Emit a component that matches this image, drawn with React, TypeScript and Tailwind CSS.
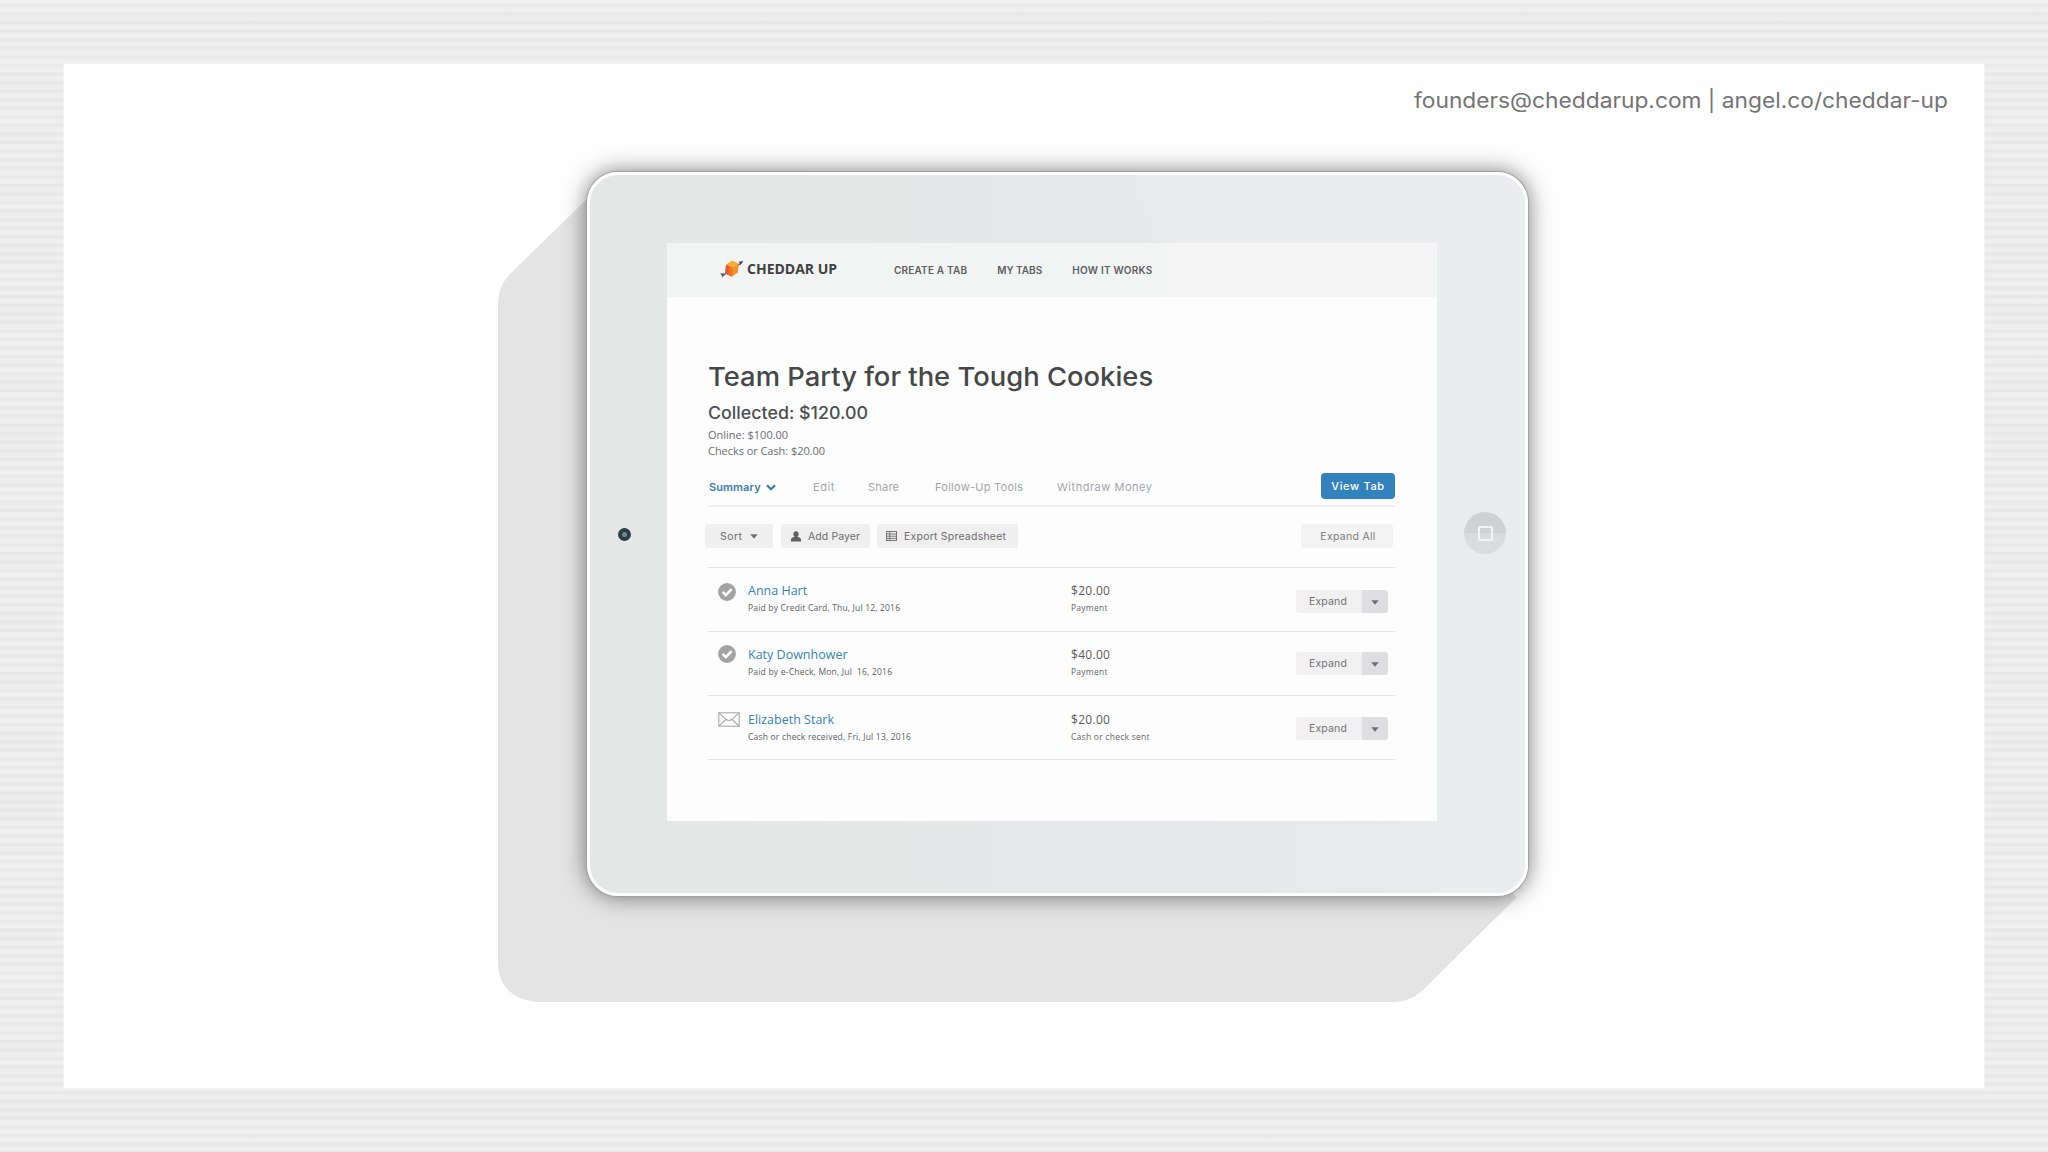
import clsx from "clsx";

type Payment = {
  name: string;
  detail: string;
  detailClass: string;
  amount: string;
  note: string;
  status: "paid" | "mailed";
  iconClass: string;
  textClass: string;
  actionClass: string;
};

const payments: Payment[] = [
  {
    name: "Anna Hart",
    detail: "Paid by Credit Card, Thu, Jul 12, 2016",
    detailClass: "tracking-[0.18px]",
    amount: "$20.00",
    note: "Payment",
    status: "paid",
    iconClass: "mt-[15px]",
    textClass: "mt-[15px]",
    actionClass: "mt-[22px]",
  },
  {
    name: "Katy Downhower",
    detail: "Paid by e-Check, Mon, Jul\u00a0 16, 2016",
    detailClass: "tracking-[0.21px]",
    amount: "$40.00",
    note: "Payment",
    status: "paid",
    iconClass: "mt-[13px]",
    textClass: "mt-[15px]",
    actionClass: "mt-5",
  },
  {
    name: "Elizabeth Stark",
    detail: "Cash or check received, Fri, Jul 13, 2016",
    detailClass: "tracking-[0.2px]",
    amount: "$20.00",
    note: "Cash or check sent",
    status: "mailed",
    iconClass: "mt-4",
    textClass: "mt-4",
    actionClass: "mt-[21px]",
  },
];

function Caret({ className }: { className?: string }) {
  return (
    <svg viewBox="0 0 8 5" className={clsx("h-[5px] w-2 shrink-0", className)}>
      <path d="M0.3 0.2h7.4L4 4.8z" fill="currentColor" />
    </svg>
  );
}

function CheddarLogo() {
  return (
    <svg viewBox="0 0 24 18" className="h-[18px] w-6 shrink-0">
      <path d="M2 16L22 2.5" stroke="#4a4f52" strokeWidth="1.4" />
      <path d="M23.6 0.8l-5.2 1.1 1.5 1 .2 2z" fill="#3f4447" />
      <path d="M0.2 13.2l3.4 0.4 1.8 1.4-2 .5-.6 2.3-1-2.4z" fill="#4a5a62" />
      <path d="M12 0.8l6.6 3.2-0.8 8.4-6 4.4-6.4-3.2L6 5z" fill="#f39325" />
      <path d="M12 0.8l6.6 3.2-6.2 3.4L6 5z" fill="#f8ab2c" />
      <path d="M6 5l6.4 2.4-.6 9.4-6.4-3.2z" fill="#ee6f2d" />
      <path d="M6 5l3.4 1.3-1 8.8-3-1.5z" fill="#e4573a" />
    </svg>
  );
}

function StatusIcon({ status }: { status: Payment["status"] }) {
  if (status === "paid") {
    return (
      <svg viewBox="0 0 18 18" className="size-[18px]">
        <circle cx="9" cy="9" r="8.9" fill="#a3a3a3" />
        <path d="M4.6 8.9l3.2 3.3 5.8-6" fill="none" stroke="#fff" strokeWidth="2.6" />
      </svg>
    );
  }

  return (
    <svg viewBox="0 0 22 15" className="h-[15px] w-[22px]" fill="none" stroke="#a9a9a9" strokeWidth="1.1">
      <rect x="0.8" y="0.8" width="20.4" height="13.4" />
      <path d="M1 1l7 6.300Q11 9.600 14 7.300L21 1M1 14l7-6.700M21 14l-7-6.700" />
    </svg>
  );
}

function ScreenHeader() {
  return (
    <header className="flex h-[54px] shrink-0 items-center bg-linear-to-r from-[#f2f3f3] from-64% to-[#f5f5f5] to-66% pl-[53px] font-['Inter',sans-serif] text-[10px] font-semibold text-[#5c5e5f]">
      <div className="flex w-[174px] items-center gap-[3px] pb-[3px]">
        <CheddarLogo />
        <span className="font-['Open_Sans',sans-serif] text-sm font-bold text-[#3f4142]">CHEDDAR UP</span>
      </div>
      <nav className="flex gap-[30px] pt-px whitespace-nowrap">
        <span className="tracking-[0.19px]">CREATE A TAB</span>
        <span>MY TABS</span>
        <span className="tracking-[0.25px]">HOW IT WORKS</span>
      </nav>
    </header>
  );
}

function TabBar() {
  return (
    <div className="mt-3.5 flex items-center border-b-2 border-[#efefef] pb-1.5 font-['Inter',sans-serif] text-[11px] whitespace-nowrap text-[#a3a5a6]">
      <div className="ml-px flex w-[104px] items-center gap-[5px] pt-0.5 font-semibold tracking-[0.1px] text-[#3c7cad]">
        Summary
        <svg viewBox="0 0 10 7" className="h-[7px] w-2.5" fill="none" stroke="currentColor" strokeWidth="2.2">
          <path d="M1 1.2l4 4 4-4" />
        </svg>
      </div>
      <span className="w-[55px] pt-0.5 tracking-[0.6px]">Edit</span>
      <span className="w-[67px] pt-0.5 tracking-[0.22px]">Share</span>
      <span className="w-[122px] pt-0.5 tracking-[0.26px]">Follow-Up Tools</span>
      <span className="pt-0.5 tracking-[0.52px]">Withdraw Money</span>
      <button className="ml-auto h-[26px] w-[74px] rounded-[4px] bg-[#3182bd] pt-px font-medium tracking-[0.66px] text-white">
        View Tab
      </button>
    </div>
  );
}

function Toolbar() {
  return (
    <div className="mt-[17px] -ml-[3px] flex h-6 items-stretch font-['Inter',sans-serif] text-[10.5px] whitespace-nowrap text-[#6d6d6d]">
      <button className="flex w-[68px] items-center rounded-[3px] bg-[#f0eff0] pt-0.5 pl-[15px] tracking-[0.45px]">
        Sort
        <Caret className="mb-px ml-2" />
      </button>
      <button className="ml-2 flex w-[89px] items-center rounded-[3px] bg-[#f0eff0] pt-0.5 pl-2.5 tracking-[0.09px]">
        <svg viewBox="0 0 10 11" className="mr-[7px] mb-0.5 h-[11px] w-2.5" fill="#626262">
          <ellipse cx="5" cy="3.2" rx="2.6" ry="3" />
          <path d="M0 10.400V8.400c0-1.400 1.600-2.200 3.400-2.400h3.200C8.400 6.200 10 7 10 8.400v2z" />
        </svg>
        Add Payer
      </button>
      <button className="ml-[7px] flex w-[141px] items-center rounded-[3px] bg-[#f0eff0] pt-0.5 pl-[9px] tracking-[0.22px]">
        <svg viewBox="0 0 11 10" className="mr-[7px] mb-0.5 h-2.5 w-[11px]" fill="none" stroke="#777">
          <rect x="0.5" y="0.5" width="10" height="9" />
          <path d="M0.500 3h10M0.500 5.200h10M0.500 7.400h10M3.800 0.500v9" />
        </svg>
        Export Spreadsheet
      </button>
      <button className="mr-0.5 ml-auto w-[92px] rounded-[3px] bg-[#f4f3f4] pt-0.5 pl-0.5 tracking-[0.29px] text-[#7c7c7c]">
        Expand All
      </button>
    </div>
  );
}

function PaymentRow({ payment }: { payment: Payment }) {
  return (
    <li className="flex h-16 items-start border-b border-[#e6e6e8] font-['Open_Sans',sans-serif] leading-4 whitespace-nowrap">
      <div className={clsx("w-10 pl-2.5", payment.iconClass)}>
        <StatusIcon status={payment.status} />
      </div>
      <div className={clsx("w-[323px]", payment.textClass)}>
        <p className="text-[12.5px] text-[#3484b2]">{payment.name}</p>
        <p className={clsx("mt-px text-[8.5px] text-[#5c5c5c]", payment.detailClass)}>{payment.detail}</p>
      </div>
      <div className={payment.textClass}>
        <p className="text-[12px] tracking-[0.3px] text-[#5a5a5c]">{payment.amount}</p>
        <p className="mt-px text-[8.5px] tracking-[0.25px] text-[#666668]">{payment.note}</p>
      </div>
      <div
        className={clsx(
          "mr-[7px] ml-auto flex h-[23px] overflow-hidden rounded-[3px] font-['Inter',sans-serif] text-[10.5px]",
          payment.actionClass,
        )}
      >
        <button className="w-[66px] bg-[#f2f1f2] pt-px pr-0.5 tracking-[0.18px] text-[#727275]">Expand</button>
        <button className="flex w-[26px] items-center justify-center bg-[#dedddf] text-[#6e6e70]">
          <Caret className="mt-0.5" />
        </button>
      </div>
    </li>
  );
}

export default function App() {
  return (
    <div className="h-[1152px] w-[2048px] overflow-hidden bg-[repeating-linear-gradient(to_bottom,#efefef_0px,#efefef_3px,#e7e7e7_5px,#e9e9e9_6.500px,#efefef_8.560px)] p-16">
      <main className="flex h-[1024px] w-[1920px] flex-col bg-[#fefefe] shadow-[0_0_2px_#fff]">
        <p className="mt-[21px] mr-9 origin-right scale-x-[1.083] self-end font-['Inter',sans-serif] text-[21px] leading-8 text-[#747474]">
          founders@cheddarup.com | angel.co/cheddar-up
        </p>

        <div className="relative mt-[55px] ml-[523px] h-[724px] w-[941px]">
          {/* long flat shadow running down-left from the tablet */}
          <svg
            viewBox="0 0 1030 810"
            className="absolute top-[22px] left-[-89px] h-[810px] w-[1030px]"
            fill="#e4e4e5"
          >
            <path d="M94 0L12 80Q0 92 0 110V772Q3 804 38 808H894Q913 808 926 795L1019 703L900 600V100z" />
          </svg>

          <div className="relative flex h-full w-full items-center rounded-[31px] border-[3px] border-white bg-linear-to-r from-[#e5e7e7] to-[#e8e9ea] shadow-[0_0_1px_1px_#a0a0a0,0_0_22px_1px_rgba(0,0,0,0.5)]">
            {/* glare across the right side of the glass */}
            <div className="pointer-events-none absolute inset-0 rounded-[28px] bg-[linear-gradient(68deg,transparent_67%,rgba(255,255,255,0.14)_70%)]" />

            <div className="relative flex w-[77px] justify-center pr-2">
              <div className="flex size-[13px] items-center justify-center rounded-full bg-[#2b3f42]">
                <div className="size-[5px] rounded-full bg-[#6d8a8c]" />
              </div>
            </div>

            <section className="relative mb-1 flex h-[578px] w-[770px] flex-col bg-[#fdfdfe]">
              <ScreenHeader />
              <div className="ml-[41px] w-[687px] pt-16">
                <h1 className="w-fit origin-left scale-x-[1.053] font-['Inter',sans-serif] text-[26px] leading-8 font-medium whitespace-nowrap text-[#454748]">
                  Team Party for the Tough Cookies
                </h1>
                <h2 className="mt-2 w-fit origin-left scale-x-[1.048] font-['Inter',sans-serif] text-[17px] leading-6 font-medium text-[#4c4e4f]">
                  Collected: $120.00
                </h2>
                <div className="mt-0.5 font-['Open_Sans',sans-serif] text-[11px] leading-4 text-[#6b6d6e]">
                  <p>Online: $100.00</p>
                  <p className="tracking-[-0.05px]">Checks or Cash: $20.00</p>
                </div>
                <TabBar />
                <Toolbar />
                <ul className="mt-[19px] border-t border-[#e6e6e8]">
                  {payments.map((payment) => (
                    <PaymentRow key={payment.name} payment={payment} />
                  ))}
                </ul>
              </div>
            </section>

            <div className="relative flex w-[87px] justify-center pb-0.5 pl-[9px]">
              <div className="flex size-[42px] items-center justify-center rounded-full bg-linear-to-b from-[#cfd2d3] from-50% to-[#d9dcdd] to-50%">
                <div className="size-[15px] rounded-[2px] border-2 border-[#f3f4f4]" />
              </div>
            </div>
          </div>
        </div>
      </main>
    </div>
  );
}
